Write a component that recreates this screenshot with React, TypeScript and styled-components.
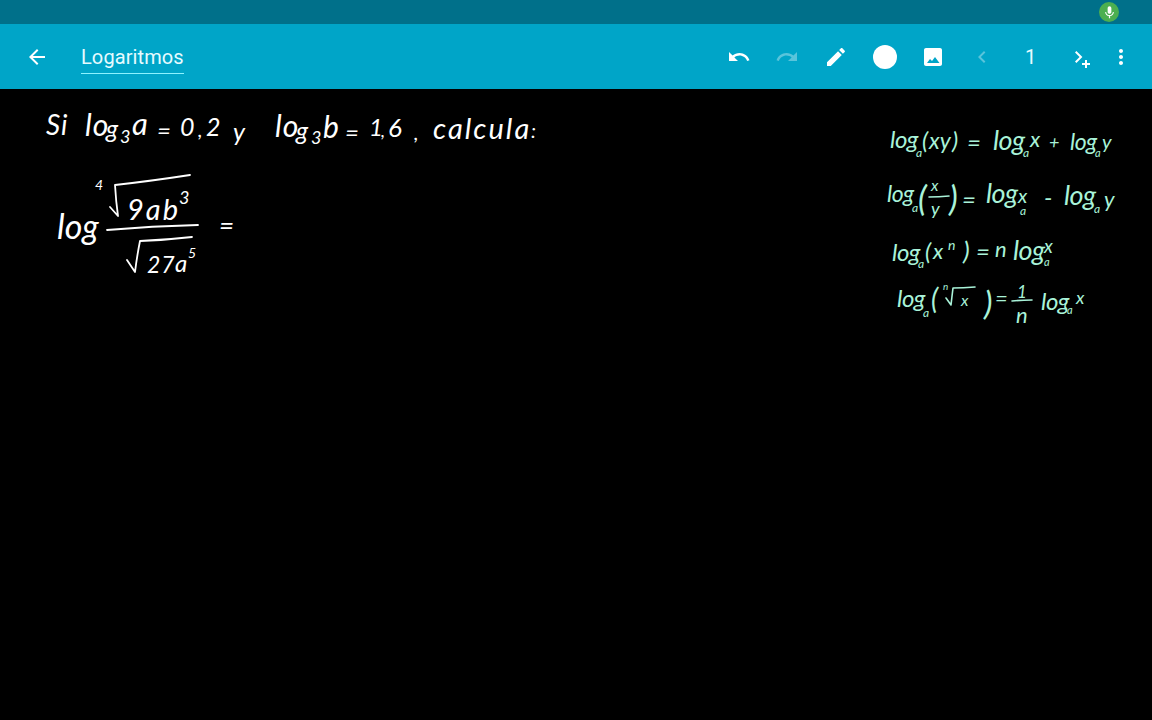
import React from 'react';
import styled, { createGlobalStyle } from 'styled-components';

const GlobalStyle = createGlobalStyle`
  html, body {
    margin: 0;
    height: 100%;
    background: #000;
  }
`;

const Screen = styled.div`
  width: 1152px;
  height: 720px;
  display: flex;
  flex-direction: column;
  overflow: hidden;
  font-family: Roboto, 'Liberation Sans', sans-serif;
`;

const StatusBar = styled.div`
  height: 24px;
  flex: none;
  display: flex;
  justify-content: flex-end;
  align-items: center;
  padding-right: 33px;
  background: #00708a;
`;

const MicBadge = styled.div`
  width: 20px;
  height: 20px;
  border-radius: 50%;
  background: #4caf50;
  display: flex;
  align-items: center;
  justify-content: center;
  color: #fff;
`;

const Toolbar = styled.div`
  height: 65px;
  flex: none;
  display: flex;
  align-items: center;
  padding-right: 19px;
  background: #00a5c8;
  color: #fff;
`;

const BackButton = styled.div`
  width: 73px;
  height: 48px;
  flex: none;
  display: flex;
  align-items: center;
  justify-content: center;
`;

const TitleField = styled.div`
  margin-left: 8px;
  height: 32px;
  box-sizing: border-box;
  border-bottom: 1px solid #8df3ff;
  font-size: 20px;
  line-height: 31px;
  letter-spacing: 0.1px;
  color: #e6fbff;
  align-self: center;
  transform: translateY(1px);
`;

const Actions = styled.div`
  margin-left: auto;
  display: flex;
  align-items: center;
`;

const ActionButton = styled.div<{ $width?: number; $faded?: boolean }>`
  width: ${p => p.$width ?? 48.7}px;
  height: 48px;
  display: flex;
  align-items: center;
  justify-content: center;
  opacity: ${p => (p.$faded ? 0.35 : 1)};
`;

const ColorDot = styled.div`
  width: 24px;
  height: 24px;
  border-radius: 50%;
  background: #fff;
`;

const PageNumber = styled.span`
  font-size: 20px;
  color: #e6fbff;
`;

const Board = styled.div`
  position: relative;
  flex: 1;
  background: #000;
  overflow: hidden;
`;

const Ink = styled.span<{ $x: number; $base: number; $size: number; $mint?: boolean; $gap?: number }>`
  position: absolute;
  left: ${p => p.$x}px;
  top: ${p => p.$base - 89 - p.$size * 0.8}px;
  font-family: Lato, 'Open Sans', sans-serif;
  font-weight: 400;
  font-style: italic;
  font-size: ${p => p.$size}px;
  line-height: 1;
  letter-spacing: ${p => p.$gap ?? 0}px;
  white-space: nowrap;
  color: ${p => (p.$mint ? '#a9f3d9' : '#fff')};
`;

const Strokes = styled.svg`
  position: absolute;
  left: 0;
  top: -89px;
  width: 1152px;
  height: 720px;
  fill: none;
  stroke-linecap: round;
  stroke-linejoin: round;
`;

type Token = [string, number, number, number, number?];

const whiteInk: Token[] = [
  ['Si', 46, 132, 28, 1],
  ['lo', 85, 133, 30, 1],
  ['g', 106, 136, 25],
  ['3', 120, 141, 18],
  ['a', 132, 133, 31],
  ['=', 157, 137, 24],
  ['0', 180, 134, 25],
  [',', 198, 135, 20],
  ['2', 206, 134, 25],
  ['y', 233, 139, 25],
  ['lo', 275, 134, 30, 1],
  ['g', 296, 138, 25],
  ['3', 311, 142, 18],
  ['b', 323, 135, 30],
  ['=', 345, 139, 24],
  ['1', 369, 134, 24],
  [',', 381, 135, 18],
  ['6', 388, 135, 26],
  [',', 414, 138, 20],
  ['calcula', 433, 136, 29, 2],
  [':', 531, 136, 20],
  ['log', 57, 236, 34],
  ['4', 95, 189, 14],
  ['9ab', 127, 217, 29, 2],
  ['3', 179, 202, 18],
  ['27', 147, 271, 23, 1],
  ['a', 175, 270, 24],
  ['5', 188, 257, 14],
  ['=', 219, 233, 26],
];

const mintInk: Token[] = [
  ['log', 890, 146, 24, -0.5],
  ['a', 916, 157, 12],
  ['(', 922, 147, 24],
  ['xy', 929, 147, 23],
  [')', 952, 147, 24],
  ['=', 967, 149, 24],
  ['log', 993, 148, 27, -0.5],
  ['a', 1023, 157, 12],
  ['x', 1030, 146, 22],
  ['+', 1049, 146, 18],
  ['log', 1070, 148, 23, -0.5],
  ['a', 1095, 156, 11],
  ['y', 1102, 147, 20],
  ['log', 887, 200, 23, -0.5],
  ['a', 912, 212, 12],
  ['(', 918, 208, 34],
  ['x', 931, 190, 16],
  ['y', 931, 213, 18],
  [')', 949, 208, 34],
  ['=', 962, 206, 24],
  ['log', 986, 201, 27, -0.5],
  ['x', 1018, 201, 20],
  ['a', 1020, 215, 12],
  ['-', 1044, 204, 24],
  ['log', 1064, 203, 27, -0.5],
  ['a', 1094, 213, 12],
  ['y', 1104, 206, 22],
  ['log', 892, 259, 24, -0.5],
  ['a', 918, 268, 12],
  ['(', 925, 258, 24],
  ['x', 933, 258, 22],
  ['n', 948, 249, 14],
  [')', 963, 258, 26],
  ['=', 976, 258, 24],
  ['n', 995, 256, 22],
  ['log', 1013, 258, 27, -0.5],
  ['a', 1044, 265, 11],
  ['x', 1044, 251, 19],
  ['log', 897, 305, 24, -0.5],
  ['a', 923, 317, 12],
  ['(', 931, 306, 28],
  ['n', 943, 289, 10],
  ['x', 961, 305, 16],
  [')', 984, 312, 33],
  ['=', 995, 305, 22],
  ['1', 1017, 297, 17],
  ['n', 1016, 322, 22],
  ['log', 1041, 308, 24, -0.5],
  ['a', 1067, 313, 11],
  ['x', 1076, 302, 18],
];

const Icon = ({ d, size = 24 }: { d: string; size?: number }) => (
  <svg width={size} height={size} viewBox="0 0 24 24" fill="currentColor">
    <path d={d} />
  </svg>
);

const App = () => {
  return (
    <Screen>
      <GlobalStyle />
      <StatusBar>
        <MicBadge>
          <Icon
            size={15}
            d="M12 14c1.66 0 3-1.34 3-3V5c0-1.66-1.34-3-3-3S9 3.34 9 5v6c0 1.66 1.34 3 3 3zm5.3-3c0 3-2.54 5.1-5.3 5.1S6.7 14 6.7 11H5c0 3.41 2.72 6.23 6 6.72V21h2v-3.28c3.28-.48 6-3.3 6-6.72h-1.7z"
          />
        </MicBadge>
      </StatusBar>

      <Toolbar>
        <BackButton>
          <Icon d="M20 11H7.83l5.59-5.59L12 4l-8 8 8 8 1.41-1.41L7.83 13H20v-2z" />
        </BackButton>
        <TitleField>Logaritmos</TitleField>
        <Actions>
          <ActionButton>
            <Icon d="M12.5 8c-2.65 0-5.05.99-6.9 2.6L2 7v9h9l-3.62-3.62c1.39-1.16 3.16-1.88 5.12-1.88 3.54 0 6.55 2.31 7.6 5.5l2.37-.78C21.08 11.03 17.15 8 12.5 8z" />
          </ActionButton>
          <ActionButton $faded>
            <Icon d="M18.4 10.6C16.55 8.99 14.15 8 11.5 8c-4.65 0-8.58 3.03-9.96 7.22L3.9 16c1.05-3.19 4.05-5.5 7.6-5.5 1.95 0 3.73.72 5.12 1.88L13 16h9V7l-3.6 3.6z" />
          </ActionButton>
          <ActionButton>
            <Icon d="M3 17.25V21h3.75L17.81 9.94l-3.75-3.75L3 17.25zM20.71 7.04c.39-.39.39-1.02 0-1.41l-2.34-2.34c-.39-.39-1.02-.39-1.41 0l-1.83 1.83 3.75 3.75 1.83-1.83z" />
          </ActionButton>
          <ActionButton>
            <ColorDot />
          </ActionButton>
          <ActionButton>
            <Icon d="M21 19V5c0-1.1-.9-2-2-2H5c-1.1 0-2 .9-2 2v14c0 1.1.9 2 2 2h14c1.1 0 2-.9 2-2zM6 18l3-4 2 2 3-4 4.5 6z" />
          </ActionButton>
          <ActionButton $faded>
            <Icon d="M15.41 7.41L14 6l-6 6 6 6 1.41-1.41L10.83 12z" />
          </ActionButton>
          <ActionButton>
            <PageNumber>1</PageNumber>
          </ActionButton>
          <ActionButton $width={54}>
            <Icon d="M6.4 6L5 7.4 9.6 12 5 16.6 6.4 18l6-6zM15 15h2v3h3v2h-3v3h-2v-3h-3v-2h3z" />
          </ActionButton>
          <ActionButton $width={24}>
            <Icon d="M12 8c1.1 0 2-.9 2-2s-.9-2-2-2-2 .9-2 2 .9 2 2 2zm0 2c-1.1 0-2 .9-2 2s.9 2 2 2 2-.9 2-2-.9-2-2-2zm0 6c-1.1 0-2 .9-2 2s.9 2 2 2 2-.9 2-2-.9-2-2-2z" />
          </ActionButton>
        </Actions>
      </Toolbar>

      <Board>
        {whiteInk.map(([text, x, base, size, gap], i) => (
          <Ink key={i} $x={x} $base={base} $size={size} $gap={gap}>
            {text}
          </Ink>
        ))}
        {mintInk.map(([text, x, base, size, gap], i) => (
          <Ink key={i} $x={x} $base={base} $size={size} $gap={gap} $mint>
            {text}
          </Ink>
        ))}
        <Strokes viewBox="0 0 1152 720">
          <g stroke="#fff" strokeWidth="1.8">
            <path d="M110 207l8 9q-2-14-3-31q36-4 75-10" />
            <path d="M107 230q45-4 91-5" />
            <path d="M127 260l8 12q2-16 5-31q26-1 52-4" />
          </g>
          <g stroke="#a9f3d9" strokeWidth="1.6">
            <path d="M929 197q10 0 20-1" />
            <path d="M946 298l5 7q1-9 2-17q10 0 22-1" />
            <path d="M1012 301q10-1 20-1" />
          </g>
        </Strokes>
      </Board>
    </Screen>
  );
};

export default App;
